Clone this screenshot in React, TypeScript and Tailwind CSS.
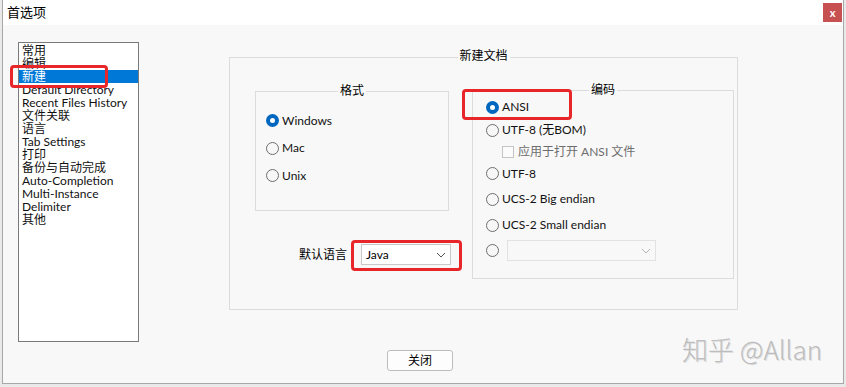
import React from "react";

const FONT = { fontFamily: 'Lato, "Noto Sans CJK SC", sans-serif' };

function Radio({ checked = false }: { checked?: boolean }) {
  return checked ? (
    <span className="inline-flex h-[13px] w-[13px] shrink-0 items-center justify-center rounded-full bg-[#0067c0]">
      <span className="h-[5px] w-[5px] rounded-full bg-white" />
    </span>
  ) : (
    <span className="inline-block h-[13px] w-[13px] shrink-0 rounded-full border border-[#6e6e6e] bg-[#f7f7f7]" />
  );
}

function RadioRow({ label, checked, h }: { label?: string; checked?: boolean; h: string }) {
  return (
    <div className={`flex items-center gap-[3px] ${h}`}>
      <Radio checked={checked} />
      {label && <span className="text-[12px] leading-none text-[#111]">{label}</span>}
    </div>
  );
}

function Chevron({ color = "#555" }: { color?: string }) {
  return (
    <svg width="10" height="6" viewBox="0 0 10 6" fill="none">
      <path d="M1 1 L5 5 L9 1" stroke={color} strokeWidth="1" />
    </svg>
  );
}

const items = [
  "常用",
  "编辑",
  "新建",
  "Default Directory",
  "Recent Files History",
  "文件关联",
  "语言",
  "Tab Settings",
  "打印",
  "备份与自动完成",
  "Auto-Completion",
  "Multi-Instance",
  "Delimiter",
  "其他",
];

export default function App() {
  return (
    <div className="relative h-[387px] w-[846px] overflow-hidden bg-[#e9e9e9]" style={FONT}>
      <div className="ml-[2px] flex h-[384px] w-[842px] flex-col border border-t-0 border-[#a8a8a8] bg-[#f8f8f8]">
        {/* title bar */}
        <div className="flex h-[25px] items-center justify-between bg-white pl-[4px] pr-[1px]">
          <span className="text-[13px] leading-none text-black">首选项</span>
          <div className="flex h-[19px] w-[19px] items-center justify-center bg-[#c75050] text-[11px] font-bold leading-none text-white">
            x
          </div>
        </div>

        {/* body */}
        <div className="flex flex-1 flex-col">
          <div className="flex">
            {/* list */}
            <div className="ml-[15px] mt-[17px] h-[300px] w-[121px] border border-[#7a7a7a] bg-white pt-[1px]">
              {items.map((it, i) => (
                <div
                  key={it}
                  className={`h-[13px] whitespace-nowrap pl-[3px] text-[12px] leading-[13px] ${
                    i === 2 ? "bg-[#0078d7] text-white" : "text-[#111]"
                  }`}
                >
                  {it}
                </div>
              ))}
            </div>

            {/* 新建文档 group */}
            <div className="relative ml-[90px] mt-[32px] h-[253px] w-[509px] border border-[#dcdcdc]">
              <span className="absolute left-1/2 top-[-8px] -translate-x-1/2 bg-[#f8f8f8] px-[2px] text-[12px] leading-none text-black">
                新建文档
              </span>
              <div className="flex">
                {/* left column */}
                <div className="ml-[25px] mt-[33px] flex flex-col">
                  <div className="relative h-[120px] w-[194px] border border-[#dcdcdc]">
                    <span className="absolute left-1/2 top-[-7px] -translate-x-1/2 bg-[#f8f8f8] px-[2px] text-[12px] leading-none text-black">
                      格式
                    </span>
                    <div className="ml-[10px] mt-[15px] flex flex-col">
                      <RadioRow label="Windows" checked h="h-[27px]" />
                      <RadioRow label="Mac" h="h-[28px]" />
                      <RadioRow label="Unix" h="h-[27px]" />
                    </div>
                  </div>
                  <div className="mt-[33px] flex items-center">
                    <span className="ml-[44px] text-[12px] leading-none text-black">默认语言</span>
                    <div className="ml-[14px] flex h-[21px] w-[90px] items-center justify-between border border-[#c8c8c8] bg-white pl-[4px] pr-[4px]">
                      <span className="text-[12px] leading-none text-black">Java</span>
                      <Chevron />
                    </div>
                  </div>
                </div>

                {/* 编码 */}
                <div className="relative ml-[21px] mt-[32px] h-[189px] w-[262px] border border-[#dcdcdc]">
                  <span className="absolute left-1/2 top-[-7px] -translate-x-1/2 bg-[#f8f8f8] px-[2px] text-[12px] leading-none text-black">
                    编码
                  </span>
                  <div className="ml-[13px] mt-[5px] flex flex-col">
                    <RadioRow label="ANSI" checked h="h-[22px]" />
                    <RadioRow label="UTF-8 (无BOM)" h="h-[24px]" />
                    <div className="flex h-[19px] items-center gap-[4px] pl-[16px]">
                      <span className="h-[12px] w-[12px] border border-[#c4c4c4] bg-[#fbfbfb]" />
                      <span className="text-[12px] leading-none text-[#6d6d6d]">应用于打开 ANSI 文件</span>
                    </div>
                    <RadioRow label="UTF-8" h="h-[25px]" />
                    <RadioRow label="UCS-2 Big endian" h="h-[26px]" />
                    <RadioRow label="UCS-2 Small endian" h="h-[26px]" />
                    <div className="flex h-[25px] items-center">
                      <Radio />
                      <div className="ml-[8px] flex h-[21px] w-[149px] items-center justify-end border border-[#e2e2e2] bg-[#f8f8f8] pr-[4px]">
                        <Chevron color="#b5b5b5" />
                      </div>
                    </div>
                  </div>
                </div>
              </div>
            </div>
          </div>

          {/* close button */}
          <div className="mt-[8px] flex">
            <div className="ml-[384px] flex h-[21px] w-[66px] items-center justify-center rounded-[3px] border border-[#bdbdbd] bg-[#fdfdfd] text-[12px] leading-none text-black">
              关闭
            </div>
          </div>
        </div>
      </div>

      {/* watermark */}
      <div
        className="absolute left-[682px] top-[336px] text-[26px] font-light leading-none text-[#bdbdbd]"
        style={{ fontFamily: '"Noto Sans CJK SC", "Noto Sans", sans-serif', textShadow: "1px 1px 0 #e0e0e0" }}
      >
        知乎 @Allan
      </div>

      {/* red annotation boxes */}
      <div className="absolute left-[10px] top-[65px] h-[23px] w-[98px] rounded-[4px] border-[3px] border-[#e8262a]" />
      <div className="absolute left-[462px] top-[89px] h-[31px] w-[110px] rounded-[4px] border-[3px] border-[#e8262a]" />
      <div className="absolute left-[351px] top-[240px] h-[31px] w-[111px] rounded-[4px] border-[3px] border-[#e8262a]" />
    </div>
  );
}
